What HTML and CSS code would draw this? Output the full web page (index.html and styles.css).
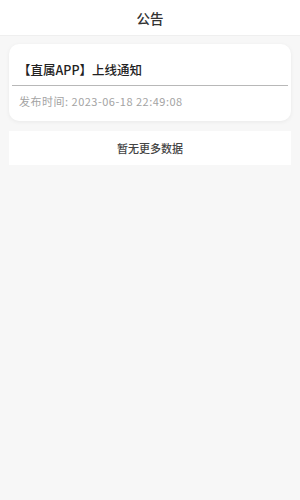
FILE: index.html
```html
<!DOCTYPE html>
<html lang="zh-CN">
<head>
    <meta charset="UTF-8">
    <meta name="viewport" content="width=device-width, initial-scale=1.0">
    <title>公告</title>
    <link rel="stylesheet" href="styles.css">
</head>
<body>
    <div class="nav-bar">
        <div class="nav-title">公告</div>
    </div>

    <div class="notice-list">
        <div class="notice-card">
            <div class="notice-title">【直属APP】上线通知</div>
            <div class="notice-divider"></div>
            <div class="notice-time">发布时间: 2023-06-18 22:49:08</div>
        </div>

        <div class="no-more">暂无更多数据</div>
    </div>
</body>
</html>
```

FILE: styles.css
```css
* {
    margin: 0;
    padding: 0;
    box-sizing: border-box;
}

body {
    font-family: "Noto Sans CJK SC", "Noto Sans", sans-serif;
    background: #f7f7f7;
    color: #333333;
    min-height: 100vh;
}

.nav-bar {
    height: 36px;
    background: #ffffff;
    border-bottom: 1px solid #efefef;
    display: flex;
    justify-content: center;
    align-items: center;
}

.nav-title {
    font-size: 13.5px;
    font-weight: 500;
    color: #333333;
}

.notice-list {
    padding: 8px 9px;
}

.notice-card {
    background: #ffffff;
    border-radius: 10px;
    box-shadow: 0 1px 4px rgba(0, 0, 0, 0.06);
    padding: 0 3px;
}

.notice-title {
    font-size: 12.5px;
    font-weight: 500;
    color: #222222;
    padding: 16px 6px 0;
    height: 41px;
}

.notice-divider {
    height: 1px;
    background: #b8b8b8;
}

.notice-time {
    font-family: "Noto Sans CJK SC", sans-serif;
    font-size: 11px;
    letter-spacing: 0.5px;
    color: #a3a3a3;
    padding: 7px 7px 0;
    height: 35px;
}

.no-more {
    margin-top: 10px;
    height: 34px;
    background: #ffffff;
    display: flex;
    justify-content: center;
    align-items: center;
    font-size: 11px;
    font-weight: 500;
    color: #444444;
}
```
